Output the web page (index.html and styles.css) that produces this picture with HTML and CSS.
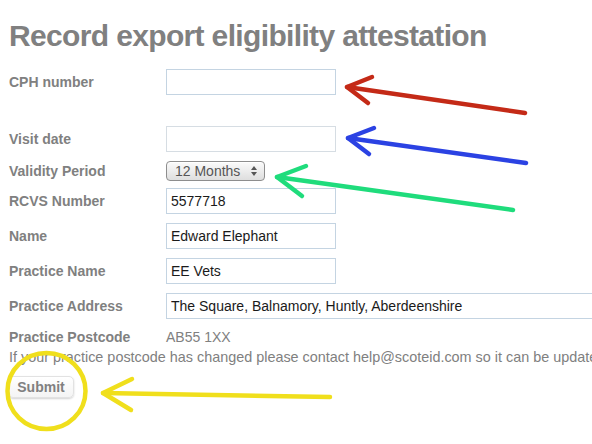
FILE: index.html
```html
<!DOCTYPE html>
<html>
<head>
<meta charset="utf-8">
<link rel="stylesheet" href="styles.css">
</head>
<body>
<div class="page">
  <h1 class="title">Record export eligibility attestation</h1>
  <form class="form">
    <div class="row row-cph">
      <label class="label">CPH number</label>
      <input class="field" type="text">
    </div>
    <div class="row">
      <label class="label">Visit date</label>
      <input class="field field-disabled" type="text">
    </div>
    <div class="row row-select">
      <label class="label">Validity Period</label>
      <div class="select">
        <span class="select-text">12 Months</span>
        <svg class="select-arrows" width="8" height="12" viewBox="0 0 8 12"><path d="M4 1 L7 5 L1 5 Z M4 11 L7 7 L1 7 Z" fill="#555"/></svg>
      </div>
    </div>
    <div class="row">
      <label class="label">RCVS Number</label>
      <input class="field" type="text" value="5577718">
    </div>
    <div class="row">
      <label class="label">Name</label>
      <input class="field" type="text" value="Edward Elephant">
    </div>
    <div class="row">
      <label class="label">Practice Name</label>
      <input class="field" type="text" value="EE Vets">
    </div>
    <div class="row">
      <label class="label">Practice Address</label>
      <input class="field field-wide" type="text" value="The Square, Balnamory, Huntly, Aberdeenshire">
    </div>
    <div class="row row-text">
      <span class="label">Practice Postcode</span>
      <span class="value">AB55 1XX</span>
    </div>
    <p class="help">If your practice postcode has changed please contact help@scoteid.com so it can be updated.</p>
    <button class="submit" type="button">Submit</button>
  </form>
</div>
<svg class="annotations" width="592" height="444" viewBox="0 0 592 444">
  <g fill="none" stroke-linecap="round" stroke-linejoin="round" stroke-width="4.5">
    <g stroke="#c42a17">
      <path d="M525 113 L347 87"/>
      <path d="M372 77 L347 87 L368 103"/>
    </g>
    <g stroke="#2b42e3">
      <path d="M526 163 L348 138"/>
      <path d="M374 128 L348 138 L369 154"/>
    </g>
    <g stroke="#1fdc7c">
      <path d="M513 210 L277 177"/>
      <path d="M306 166 L277 177 L302 196"/>
    </g>
    <g stroke="#f0df1c">
      <path d="M330 397 L103 393"/>
      <path d="M132 379 L103 393 L131 410"/>
      <ellipse cx="46.5" cy="391" rx="39" ry="38"/>
    </g>
  </g>
</svg>
</body>
</html>
```
FILE: styles.css
```css
html, body {
  margin: 0;
  padding: 0;
  background: #fff;
}
body {
  width: 592px;
  height: 444px;
  overflow: hidden;
  position: relative;
  font-family: "Liberation Sans", Arial, sans-serif;
}
.page {
  padding: 0 9px;
}
.title {
  margin: 18px 0 0;
  font-size: 30px;
  line-height: 36px;
  letter-spacing: -0.65px;
  font-weight: bold;
  color: #808080;
  white-space: nowrap;
}
.form {
  margin-top: 15px;
  display: flex;
  flex-direction: column;
}
.row {
  display: flex;
  align-items: center;
  height: 26px;
  margin-bottom: 9px;
}
.row-cph {
  margin-bottom: 31px;
}
.row-select {
  height: 20px;
  margin-bottom: 7px;
}
.label {
  width: 157px;
  flex: none;
  font-size: 14px;
  font-weight: bold;
  color: #808080;
}
.field {
  box-sizing: border-box;
  width: 170px;
  height: 26px;
  margin: 0;
  padding: 0 4px;
  border: 1px solid #c4d4e2;
  border-radius: 0;
  font-family: "Liberation Sans", Arial, sans-serif;
  font-size: 14px;
  color: #1a1a1a;
  background: #fff;
  outline: none;
}
.field-disabled {
  border-color: #d6dde3;
}
.field-wide {
  width: 440px;
  flex: none;
}
.select {
  box-sizing: border-box;
  width: 99px;
  height: 20px;
  display: flex;
  align-items: center;
  justify-content: space-between;
  padding: 0 6px 0 8px;
  border: 1px solid #8e8e8e;
  border-radius: 4px;
  background: linear-gradient(#fbfbfb, #dedede);
  box-shadow: inset 0 1px 0 #fff;
}
.select-text {
  font-size: 14px;
  color: #555;
}
.row-text {
  height: 18px;
  margin-top: 0;
  margin-bottom: 2px;
}
.value {
  font-size: 14px;
  color: #808080;
}
.help {
  margin: 0;
  font-size: 14.4px;
  line-height: 18px;
  color: #808080;
  white-space: nowrap;
}
.submit {
  align-self: flex-start;
  margin-top: 10px;
  box-sizing: border-box;
  width: 66px;
  height: 22px;
  margin-left: -1px;
  padding: 0;
  border: 1px solid #e2e2e2;
  border-radius: 5px;
  background: linear-gradient(#ffffff, #f4f4f4);
  box-shadow: 0 1px 2px rgba(0, 0, 0, 0.18);
  font-family: "Liberation Sans", Arial, sans-serif;
  font-size: 14px;
  font-weight: bold;
  color: #808080;
}
.annotations {
  position: absolute;
  left: 0;
  top: 0;
  pointer-events: none;
}
```
